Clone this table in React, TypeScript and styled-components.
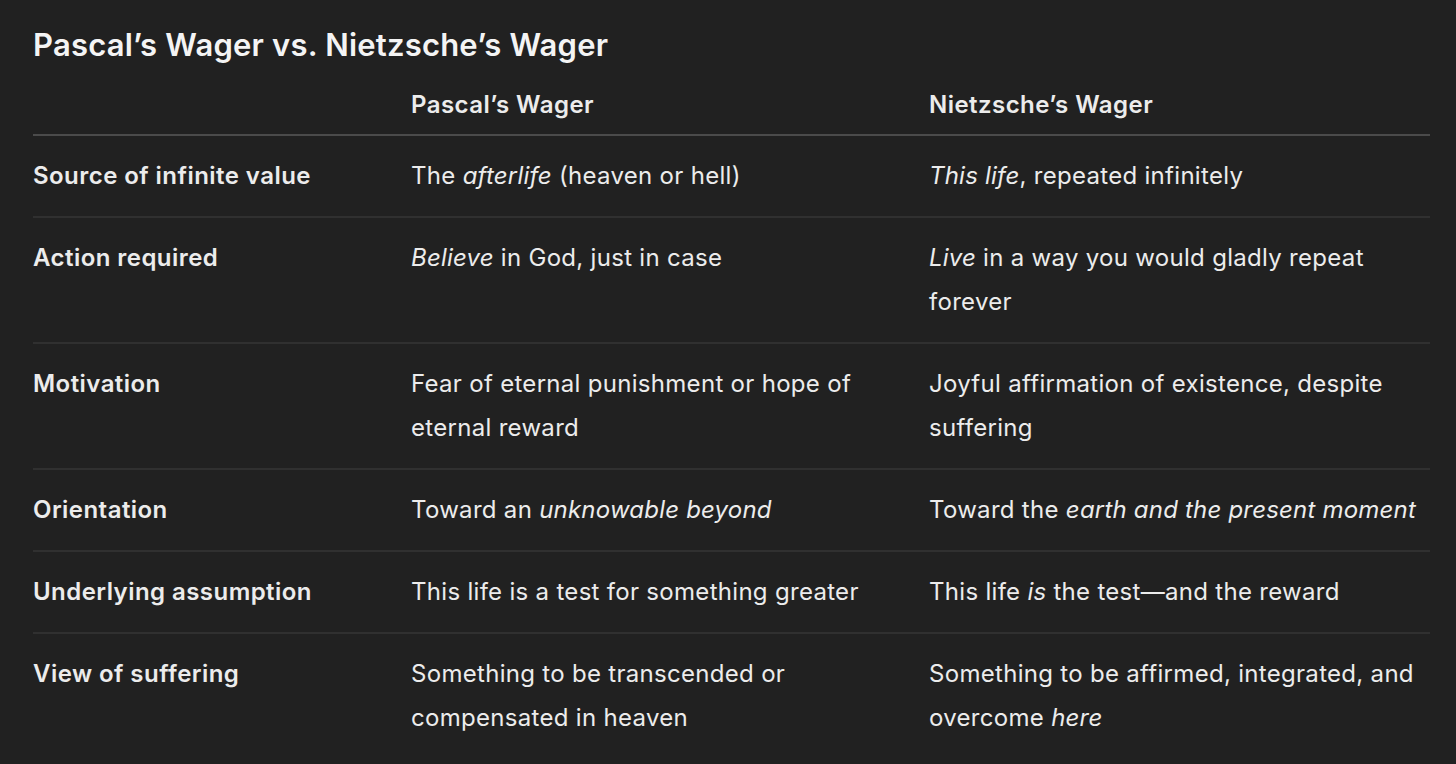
import styled, { createGlobalStyle } from 'styled-components';

const GlobalStyle = createGlobalStyle`
  html, body {
    margin: 0;
    padding: 0;
    background-color: #212121;
  }
  body {
    font-family: Inter, 'Noto Sans', sans-serif;
    color: #ececec;
  }
`;

const Page = styled.div`
  width: 1456px;
  height: 764px;
  box-sizing: border-box;
  padding: 24px 26px 0 33px;
  background-color: #212121;
  overflow: hidden;
`;

const Title = styled.h2`
  margin: 0 0 17px;
  font-size: 31px;
  line-height: 42px;
  font-weight: 600;
  letter-spacing: 0.2px;
  color: #f4f4f4;
`;

const Table = styled.div`
  display: grid;
  grid-template-columns: 378px 518px 1fr;
`;

const Cell = styled.div<{ $head?: boolean; $bold?: boolean; $last?: boolean }>`
  font-size: 24px;
  line-height: 44px;
  font-weight: ${(p) => (p.$head || p.$bold ? 600 : 400)};
  letter-spacing: ${(p) => (p.$head || p.$bold ? '0.45px' : '0.3px')};
  padding: ${(p) => (p.$head ? '0 8px 7px 0' : '18px 8px 18px 0')};
  border-bottom: ${(p) =>
    p.$last ? 'none' : `2px solid ${p.$head ? '#4b4b4b' : '#303030'}`};

  em {
    letter-spacing: 0.2px;
  }
`;

const rows: [string, React.ReactNode, React.ReactNode][] = [
  [
    'Source of infinite value',
    <>The <em>afterlife</em> (heaven or hell)</>,
    <><em>This life</em>, repeated infinitely</>
  ],
  [
    'Action required',
    <><em>Believe</em> in God, just in case</>,
    <><em>Live</em> in a way you would gladly repeat forever</>
  ],
  [
    'Motivation',
    'Fear of eternal punishment or hope of eternal reward',
    'Joyful affirmation of existence, despite suffering'
  ],
  [
    'Orientation',
    <>Toward an <em>unknowable beyond</em></>,
    <>Toward the <em>earth and the present moment</em></>
  ],
  [
    'Underlying assumption',
    'This life is a test for something greater',
    <>This life <em>is</em> the test—and the reward</>
  ],
  [
    'View of suffering',
    'Something to be transcended or compensated in heaven',
    <>Something to be affirmed, integrated, and overcome <em>here</em></>
  ]
];

export default function App() {
  return (
    <Page>
      <GlobalStyle />
      <Title>Pascal’s Wager vs. Nietzsche’s Wager</Title>
      <Table>
        <Cell $head />
        <Cell $head>Pascal’s Wager</Cell>
        <Cell $head>Nietzsche’s Wager</Cell>
        {rows.map(([label, pascal, nietzsche], i) => {
          const last = i === rows.length - 1;
          return [
            <Cell key={label} $bold $last={last}>{label}</Cell>,
            <Cell key={label + '-p'} $last={last}>{pascal}</Cell>,
            <Cell key={label + '-n'} $last={last}>{nietzsche}</Cell>
          ];
        })}
      </Table>
    </Page>
  );
}
